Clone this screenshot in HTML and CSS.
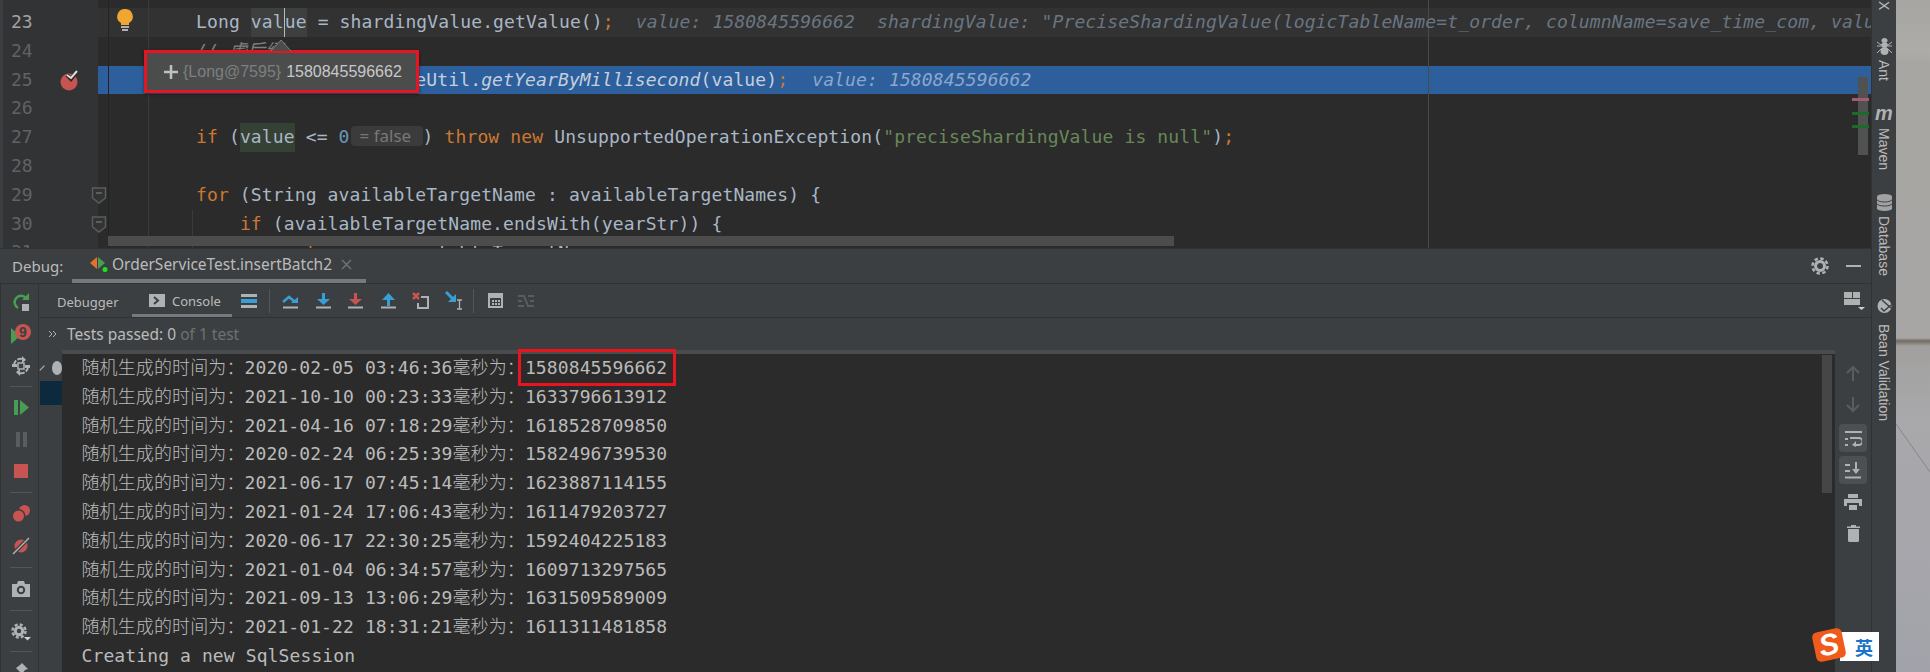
FILE: index.html
```html
<!DOCTYPE html>
<html lang="zh">
<head>
<meta charset="utf-8">
<title>Debug</title>
<link rel="stylesheet" href="styles.css">
</head>
<body>
<div class="root">
  <div class="ide">
    <section class="editor">
      <div class="row first"><div class="gutter">22</div><div class="code"></div></div>
      <div class="row current"><div class="gutter active">23</div><div class="code">Long <span class="sel">val<i class="caret"></i>ue</span> = shardingValue.getValue()<b class="kw">;</b>  <span class="hint">value: 1580845596662  shardingValue: "PreciseShardingValue(logicTableName=t_order, columnName=save_time_com, value=1580845596662)"</span></div>
        <svg class="bulb" width="16" height="24" viewBox="0 0 16 24"><path d="M8 0a7.5 7.5 0 0 1 4 14v2H4v-2A7.500 7.500 0 0 1 8 0z" fill="#f0a732"/><path d="M4 18h8M5 21h6" stroke="#afb1b3" stroke-width="2"/></svg>
      </div>
      <div class="row"><div class="gutter">24</div><div class="code"><span class="cm">// 虚后缀</span></div></div>
      <div class="row exec"><div class="gutter">25<svg class="bp" width="20" height="22" viewBox="0 0 20 22"><circle cx="9" cy="13" r="8.500" fill="#c75450"/><path d="M7 6l4 4 6-8" fill="none" stroke="#2b2b2b" stroke-width="4"/><path d="M7 6l4 3 6-7" fill="none" stroke="#e0e0e0" stroke-width="2"/></svg></div><div class="code">String yearStr = DateUtil.<em>getYearByMillisecond</em>(value)<b class="kw">;</b>  <span class="hint">value: 1580845596662</span></div></div>
      <div class="row"><div class="gutter">26</div><div class="code"></div></div>
      <div class="row"><div class="gutter">27</div><div class="code"><b class="kw">if</b> (<span class="read">value</span> &lt;= <span class="num">0</span><span class="inlay">= false</span>) <b class="kw">throw new</b> UnsupportedOperationException(<span class="str">"preciseShardingValue is null"</span>)<b class="kw">;</b></div></div>
      <div class="row"><div class="gutter">28</div><div class="code"></div></div>
      <div class="row"><div class="gutter">29<svg class="fold" width="16" height="17" viewBox="0 0 16 17"><path d="M1.500 1h13v10l-6.500 5-6.500-5z" fill="#313335" stroke="#5a5d5e" stroke-width="1.500"/><path d="M5 6h6" stroke="#6a6d6e" stroke-width="1.500"/></svg></div><div class="code"><b class="kw">for</b> (String availableTargetName : availableTargetNames) {</div></div>
      <div class="row"><div class="gutter">30<svg class="fold" width="16" height="17" viewBox="0 0 16 17"><path d="M1.500 1h13v10l-6.500 5-6.500-5z" fill="#313335" stroke="#5a5d5e" stroke-width="1.500"/><path d="M5 6h6" stroke="#6a6d6e" stroke-width="1.500"/></svg></div><div class="code guide">    <b class="kw">if</b> (availableTargetName.endsWith(yearStr)) {</div></div>
      <div class="row"><div class="gutter">31</div><div class="code guide">        <b class="kw">return</b>    availableTargetName<b class="kw">;</b></div></div>
      <div class="hscroll"></div>
      <div class="thumb"></div>
      <div class="stripe pink"></div>
      <div class="stripe green a"></div>
      <div class="stripe green b"></div>
      <div class="popup">
        <svg class="tip" width="22" height="13" viewBox="0 0 22 13"><path d="M1 12L11 1l10 11" fill="#4b4d4d" stroke="#7b7d7d"/></svg>
        <svg class="plus" width="14" height="14" viewBox="0 0 14 14"><path d="M7 0v14M0 7h14" stroke="#c0c0c0" stroke-width="2.500"/></svg><span class="ref">{Long@7595}</span><span class="val">1580845596662</span>
      </div>
    </section>

    <section class="debug">
      <header class="dbg-head">
        <span class="dbg-title">Debug:</span>
        <div class="dbg-tab">
          <svg class="runicon" width="20" height="15" viewBox="0 0 20 15"><path d="M7 0v12L0 6z" fill="#e8702a"/><path d="M8 0v12l7-6z" fill="#499c54"/><circle cx="15" cy="12.500" r="2.500" fill="#19e619"/></svg>
          <span>OrderServiceTest.insertBatch2</span>
          <svg class="close" width="11" height="11" viewBox="0 0 11 11"><path d="M1 1l9 9M10 1l-9 9" stroke="#6e7173" stroke-width="1.500"/></svg>
        </div>
        <div class="head-tools">
          <svg width="18" height="18" viewBox="0 0 18 18"><circle cx="9" cy="9" r="4.500" fill="none" stroke="#afb1b3" stroke-width="3"/><circle cx="9" cy="9" r="7.500" fill="none" stroke="#afb1b3" stroke-width="2.500" stroke-dasharray="3.400 2.500"/></svg>
          <span class="minimize"></span>
        </div>
      </header>
      <div class="dbg-body">
        <aside class="rail">
          <div class="rb"><svg width="18" height="18" viewBox="0 0 18 18"><path d="M6 15A6.500 6.500 0 1 1 14 5" fill="none" stroke="#499c54" stroke-width="2.500"/><path d="M10 7h7V0z" fill="#499c54"/><rect x="10" y="11" width="7" height="7" fill="#afb1b3"/></svg></div>
          <div class="rb"><svg width="20" height="20" viewBox="0 0 20 20"><path d="M0 4l9 8-9 8z" fill="#499c54"/><circle cx="12" cy="8" r="8" fill="#c75450"/><text x="12" y="13" class="nine">9</text></svg></div>
          <div class="rb"><svg width="18" height="20" viewBox="0 0 18 20"><path d="M2 9a7 7 0 0 1 11-5M16 11a7 7 0 0 1-11 5" fill="none" stroke="#afb1b3" stroke-width="2" stroke-dasharray="5 1.500"/><path d="M0 8h5v3H0zM13 9h5v3h-5zM10 0l4 4-4 3zM8 13l-4 3 4 4z" fill="#afb1b3"/><rect x="6" y="7" width="6" height="6" fill="none" stroke="#afb1b3" stroke-width="1.500"/></svg></div>
          <div class="sep"></div>
          <div class="rb"><svg width="15" height="15" viewBox="0 0 15 15"><rect width="4" height="15" fill="#499c54"/><path d="M6 0l9 7.500L6 15z" fill="#499c54"/></svg></div>
          <div class="rb"><svg width="11" height="15" viewBox="0 0 11 15"><path d="M0 0h4v15H0zM7 0h4v15H7z" fill="#5a5d5e"/></svg></div>
          <div class="rb"><svg width="14" height="14" viewBox="0 0 14 14"><rect width="14" height="14" fill="#c75450"/></svg></div>
          <div class="sep wide"></div>
          <div class="rb"><svg width="18" height="18" viewBox="0 0 18 18"><circle cx="12.500" cy="5.500" r="5.500" fill="#c75450"/><circle cx="6.500" cy="11" r="7" fill="#3c3f41"/><circle cx="6.500" cy="11" r="5.500" fill="#c75450"/></svg></div>
          <div class="rb"><svg width="18" height="18" viewBox="0 0 18 18"><circle cx="9" cy="9" r="6.500" fill="#c75450"/><path d="M1 17L17 1" stroke="#3c3f41" stroke-width="4"/><path d="M1 17L17 1" stroke="#afb1b3" stroke-width="1.500"/></svg></div>
          <div class="sep wide"></div>
          <div class="rb"><svg width="18" height="16" viewBox="0 0 18 16"><path d="M0 3h5l1-3h6l1 3h5v13H0z" fill="#afb1b3"/><circle cx="9" cy="9" r="3.200" fill="none" stroke="#3c3f41" stroke-width="2"/></svg></div>
          <div class="sep wide"></div>
          <div class="rb"><svg width="20" height="18" viewBox="0 0 20 18"><circle cx="8" cy="8" r="3.700" fill="none" stroke="#afb1b3" stroke-width="3"/><circle cx="8" cy="8" r="6.500" fill="none" stroke="#afb1b3" stroke-width="2.500" stroke-dasharray="3 2.100"/><path d="M13 14h7l-3.500 3.500z" fill="#cfd0d1"/></svg></div>
          <div class="sep tight"></div>
          <div class="rb"><svg width="16" height="16" viewBox="0 0 16 16"><path d="M9 0l6 6-3 1-3 4-6-6 4-3zM4 9l3 3-6 4z" fill="#afb1b3"/></svg></div>
        </aside>
        <div class="main">
          <div class="tabs">
            <div class="tab">Debugger</div>
            <div class="tab on"><svg width="16" height="13" viewBox="0 0 16 13"><rect width="16" height="13" fill="#afb1b3"/><path d="M5 3l4 3.500L5 10" fill="none" stroke="#3c3f41" stroke-width="2"/></svg>Console</div>
            <svg class="tb menu" width="16" height="14" viewBox="0 0 16 14"><path d="M0 0h16v3H0zM0 11h16v3H0z" fill="#afb1b3"/><path d="M0 5h16v4H0z" fill="#389fd6"/></svg>
            <span class="vsep"></span>
            <svg class="tb" width="17" height="16" viewBox="0 0 17 16"><path d="M1 9l6-5 6 5" fill="none" stroke="#389fd6" stroke-width="2.500"/><path d="M9 10h7V4z" fill="#389fd6"/><path d="M1 14.500h15" stroke="#afb1b3" stroke-width="2"/></svg>
            <svg class="tb" width="17" height="16" viewBox="0 0 17 16"><path d="M8.500 0v7" stroke="#389fd6" stroke-width="3"/><path d="M2 6h13l-6.500 6z" fill="#389fd6"/><path d="M1 14.500h15" stroke="#afb1b3" stroke-width="2"/></svg>
            <svg class="tb" width="17" height="16" viewBox="0 0 17 16"><path d="M8.500 0v7" stroke="#c75450" stroke-width="3"/><path d="M2 6h13l-6.500 6z" fill="#c75450"/><path d="M1 14.500h15" stroke="#afb1b3" stroke-width="2"/></svg>
            <svg class="tb" width="17" height="16" viewBox="0 0 17 16"><path d="M8.500 5v8" stroke="#389fd6" stroke-width="3"/><path d="M2 7h13L8.500 0z" fill="#389fd6"/><path d="M1 14.500h15" stroke="#afb1b3" stroke-width="2"/></svg>
            <svg class="tb" width="17" height="17" viewBox="0 0 17 17"><path d="M9 5h7v11H6v-5" fill="none" stroke="#afb1b3" stroke-width="2"/><path d="M1 1l6 6M7 1L1 7" stroke="#c75450" stroke-width="2.500"/></svg>
            <svg class="tb last" width="19" height="19" viewBox="0 0 19 19"><path d="M1 1l8 8" stroke="#389fd6" stroke-width="3"/><path d="M11 3v8H3z" fill="#389fd6"/><path d="M12 9h5M12 18h5M14.500 9v9" stroke="#afb1b3" stroke-width="1.300"/></svg>
            <span class="vsep two"></span>
            <svg class="tb" width="15" height="15" viewBox="0 0 15 15"><rect x="1" y="1" width="13" height="13" fill="none" stroke="#afb1b3" stroke-width="2"/><path d="M1 1h13v4H1z" fill="#afb1b3"/><path d="M4 7h2v2H4zM7 7h2v2H7zM10 7h2v2h-2zM4 10h2v2H4zM7 10h2v2H7zM10 10h2v2h-2z" fill="#afb1b3"/></svg>
            <svg class="tb" width="16" height="14" viewBox="0 0 16 14"><path d="M0 2h6l4 10h6M0 7h4M12 7h4M10 2h6M0 12h6" fill="none" stroke="#5a5d5e" stroke-width="2"/></svg>
            <svg class="layout" width="22" height="18" viewBox="0 0 22 18"><path d="M0 0h8v6H0zM9 0h7v6H9zM0 7h16v6H0z" fill="#afb1b3"/><path d="M14 15h7l-3.500 3z" fill="#cfd0d1"/></svg>
          </div>
          <div class="tests"><svg class="chev" width="9" height="8" viewBox="0 0 9 8"><path d="M1 1l3 3-3 3M5 1l3 3-3 3" fill="none" stroke="#afb1b3"/></svg><span>Tests passed: 0 </span><span class="dim">of 1 test</span></div>
          <div class="panes">
            <div class="frames">
              <div class="frame"><svg width="9" height="8" viewBox="0 0 9 8"><path d="M1 7l6-6" stroke="#afb1b3" stroke-width="1.500"/></svg><span class="dot"></span></div>
              <div class="frame chosen"></div>
            </div>
            <div class="console">
              <div class="cl">随机生成的时间为：2020-02-05 03:46:36毫秒为：<span class="mark">1580845596662</span></div>
              <div class="cl">随机生成的时间为：2021-10-10 00:23:33毫秒为：1633796613912</div>
              <div class="cl">随机生成的时间为：2021-04-16 07:18:29毫秒为：1618528709850</div>
              <div class="cl">随机生成的时间为：2020-02-24 06:25:39毫秒为：1582496739530</div>
              <div class="cl">随机生成的时间为：2021-06-17 07:45:14毫秒为：1623887114155</div>
              <div class="cl">随机生成的时间为：2021-01-24 17:06:43毫秒为：1611479203727</div>
              <div class="cl">随机生成的时间为：2020-06-17 22:30:25毫秒为：1592404225183</div>
              <div class="cl">随机生成的时间为：2021-01-04 06:34:57毫秒为：1609713297565</div>
              <div class="cl">随机生成的时间为：2021-09-13 13:06:29毫秒为：1631509589009</div>
              <div class="cl">随机生成的时间为：2021-01-22 18:31:21毫秒为：1611311481858</div>
              <div class="cl">Creating a new SqlSession</div>
              <div class="cthumb"></div>
            </div>
            <div class="ctools">
              <svg class="ct" width="14" height="16" viewBox="0 0 14 16"><path d="M7 16V2M1 8l6-6 6 6" fill="none" stroke="#5a5d5e" stroke-width="2"/></svg>
              <svg class="ct" width="14" height="16" viewBox="0 0 14 16"><path d="M7 0v14M1 8l6 6 6-6" fill="none" stroke="#5a5d5e" stroke-width="2"/></svg>
              <div class="toggle"><svg width="17" height="17" viewBox="0 0 17 17"><path d="M0 2h17" stroke="#afb1b3" stroke-width="2"/><path d="M5 8h9a2.500 2.500 0 0 1 0 7H9" fill="none" stroke="#afb1b3" stroke-width="2"/><path d="M11 11l-4 4 4 2zM0 8h3v2H0zM0 14h3v2H0z" fill="#afb1b3"/></svg></div>
              <div class="toggle"><svg width="16" height="17" viewBox="0 0 16 17"><path d="M0 15.500h16M0 3h5M0 9h5M11 0v10" stroke="#afb1b3" stroke-width="2"/><path d="M7 7h8l-4 5z" fill="#afb1b3"/></svg></div>
              <svg class="ct print" width="18" height="17" viewBox="0 0 18 17"><path d="M4 0h10v4H4zM0 5h18v7h-3V9H3v3H0zM5 11h8v5H5z" fill="#afb1b3"/></svg>
              <svg class="ct trash" width="13" height="17" viewBox="0 0 13 17"><path d="M0 1.500h13V3H0zM4 0h5v2H4zM1 4h11v11.500a1.500 1.500 0 0 1-1.500 1.500h-8A1.500 1.500 0 0 1 1 15.500z" fill="#afb1b3"/></svg>
            </div>
          </div>
        </div>
      </div>
    </section>
  </div>

  <aside class="strip">
    <span class="label cut">X</span>
    <svg class="si ant" width="15" height="17" viewBox="0 0 15 17"><ellipse cx="7.500" cy="2.500" rx="3" ry="2.500" fill="#afb1b3"/><ellipse cx="7.500" cy="7" rx="3.500" ry="2.500" fill="#afb1b3"/><ellipse cx="7.500" cy="13" rx="4" ry="4" fill="#afb1b3"/><path d="M0 4l4 3M15 4l-4 3M0 8h4M15 8h-4M0 15l4-4M15 15l-4-4" stroke="#afb1b3"/></svg>
    <span class="label">Ant</span>
    <span class="mvn">m</span>
    <span class="label">Maven</span>
    <svg class="si db" width="15" height="17" viewBox="0 0 15 17"><path d="M0 2.500a7.500 2.500 0 0 1 15 0v12a7.500 2.500 0 0 1-15 0z" fill="#a0a2a4"/><path d="M0 5.500a7.500 2.500 0 0 0 15 0M0 9.500a7.500 2.500 0 0 0 15 0" fill="none" stroke="#3c3f41"/></svg>
    <span class="label">Database</span>
    <svg class="si bean" width="15" height="16" viewBox="0 0 15 16"><circle cx="7.500" cy="8" r="7" fill="#afb1b3"/><path d="M5 2l9 8M4 10l3 3 7-6" fill="none" stroke="#3c3f41" stroke-width="1.500"/></svg>
    <span class="label">Bean Validation</span>
  </aside>
  <div class="wall"><svg class="crack" width="34" height="60" viewBox="0 0 34 60"><path d="M0 0l34 48" stroke="#85858b"/></svg></div>

  <div class="ime"><span class="ime-s">S</span><span class="ime-t">英</span></div>
</div>
</body>
</html>
```
FILE: styles.css
```css
* { box-sizing: border-box; }
html, body { margin: 0; height: 100%; background: #3c3f41; }
body { overflow: hidden; }
.root { position: relative; display: flex; width: 1930px; height: 672px; overflow: hidden; font-family: "Noto Sans", "Noto Sans CJK SC", sans-serif; color: #bbbbbb; }
.ide { width: 1871px; display: flex; flex-direction: column; }

/* editor */
.editor { position: relative; height: 248px; overflow: hidden; background: #2b2b2b; border-left: 3px solid #3c3f41; flex: none; font: 18px/28.800px "DejaVu Sans Mono", "Noto Sans CJK SC", monospace; letter-spacing: .13px; color: #a9b7c6; }
.row { position: relative; display: flex; height: 28.800px; }
.row.first { margin-top: -20.800px; }
.gutter { position: relative; width: 95px; flex: none; padding-left: 8px; background: #313335; color: #606366; letter-spacing: 0; }
.gutter.active { color: #a4a3a3; }
.code { flex: 1; min-width: 0; padding-left: 98px; white-space: pre; overflow: hidden;
  background-image: linear-gradient(#3a3c3c, #3a3c3c), linear-gradient(#232323, #232323), linear-gradient(#4a4a4a, #4a4a4a);
  background-repeat: no-repeat; background-size: 1px 100%; background-position: 50px 0, 10px 0, 1330px 0; }
.code.guide { background-image: linear-gradient(#3a3c3c, #3a3c3c), linear-gradient(#232323, #232323), linear-gradient(#4a4a4a, #4a4a4a), linear-gradient(#3a3c3c, #3a3c3c); background-position: 50px 0, 10px 0, 1330px 0, 94px 0; }
.current .code { background-color: #323232; }
.exec .code { background-color: #2d5f9c; color: #c3cfdc; }
.exec em { font-style: italic; }
.exec .hint { color: #8ca7cb; margin-left: 2px; }
.kw { font-weight: 400; color: #cc7832; }
.num { color: #6897bb; }
.str { color: #6a8759; }
.cm { color: #808080; font-style: italic; }
.hint { font-style: italic; color: #697682; }
.sel { display: inline-block; height: 28.800px; background: #3e4040; }
.read { display: inline-block; height: 28.800px; background: #344134; }
.caret { display: inline-block; width: 0; height: 28.800px; vertical-align: top; border-left: 1px solid #bbbbbb; }
.inlay { display: inline-block; width: 72px; height: 20px; margin: 0 0 0 1px; padding-left: 9px; border-radius: 4px; background: #3b3b3b; color: #787878; font: 17px/20px "Noto Sans", sans-serif; letter-spacing: 0; vertical-align: 1px; }
.bulb { position: absolute; left: 114px; top: 1px; }
.bp { position: absolute; left: 57px; top: 3px; }
.fold { position: absolute; left: 88px; top: 6px; }
.hscroll { position: absolute; left: 105px; top: 236px; width: 1066px; height: 10px; background: #4c4c4c; }
.thumb { position: absolute; left: 1855px; top: 77px; width: 10px; height: 78px; background: #505252; }
.stripe { position: absolute; left: 1849px; width: 17px; height: 3px; }
.stripe.pink { top: 98px; background: #a85a6e; }
.stripe.green { background: #1c6b28; }
.stripe.a { top: 112px; }
.stripe.b { top: 125px; }
.popup { position: absolute; left: 141px; top: 50px; width: 275px; height: 43px; display: flex; align-items: center; padding-left: 17px; background: #4b4d4d; border: 3px solid #e8141f; box-shadow: 0 1px 3px rgba(0,0,0,.5); font: 16px "Liberation Sans", sans-serif; letter-spacing: 0; }
.tip { position: absolute; left: 123px; top: -14px; }
.plus { flex: none; margin-right: 5px; }
.ref { color: #7d7f80; }
.val { color: #c8c8c8; margin-left: 5px; }

/* debug tool window */
.debug { flex: 1; display: flex; flex-direction: column; min-height: 0; border-top: 1px solid #323232; }
.dbg-head { height: 35px; flex: none; display: flex; align-items: center; padding-left: 12px; border-bottom: 1px solid #323232; font-size: 15px; }
.dbg-title { width: 60px; }
.dbg-tab { display: flex; align-items: center; align-self: stretch; width: 294px; padding-left: 18px; border-bottom: 4px solid #747a80; font-size: 15.500px; }
.runicon { flex: none; }
.dbg-tab span { margin-left: 2px; }
.dbg-tab .close { flex: none; margin-left: 9px; }
.head-tools { margin-left: auto; display: flex; align-items: center; gap: 17px; padding-right: 10px; }
.minimize { width: 15px; height: 2px; background: #afb1b3; }
.dbg-body { flex: 1; display: flex; min-height: 0; }
.rail { width: 39px; flex: none; padding: 2px 0 0 3px; border-right: 1px solid #323232; border-left: 1px solid #323232; display: flex; flex-direction: column; }
.rb { height: 32px; flex: none; display: flex; align-items: center; justify-content: center; }
.sep { height: 1px; margin: 4px 6px; flex: none; background: #515658; }
.sep.wide { margin: 5px 6px; }
.sep.tight { margin: 3px 6px; }
.nine { fill: #3c3f41; font: 700 14px "Liberation Sans", sans-serif; text-anchor: middle; }
.main { flex: 1; min-width: 0; display: flex; flex-direction: column; }
.tabs { height: 34px; flex: none; display: flex; align-items: center; border-bottom: 1px solid #323232; font-size: 13px; }
.tab { display: flex; align-items: center; align-self: stretch; }
.tab:first-child { width: 93px; padding: 2px 0 0 18px; }
.tab.on { width: 100px; gap: 7px; padding: 3px 0 0 17px; border-bottom: 3px solid #747a80; }
.tb { flex: none; margin-right: 15.500px; }
.menu { margin: 0 0 0 9px; }
.vsep { width: 1px; height: 24px; margin: 0 12px; background: #515658; }
.tb.last { margin-right: 0; }
.vsep.two { margin: 0 13.500px 0 9.500px; }
.layout { margin-left: auto; margin-right: 5px; }
.tests { height: 32px; flex: none; display: flex; align-items: center; padding-left: 9px; font-size: 15.500px; white-space: pre; }
.chev { flex: none; margin-right: 10px; }
.dim { color: #6e7173; }
.panes { flex: 1; display: flex; min-height: 0; }
.frames { width: 23px; flex: none; padding-top: 5px; }
.frame { height: 26px; display: flex; align-items: center; gap: 6px; overflow: hidden; }
.frame .dot { width: 10px; height: 14px; flex: none; border-radius: 50%; background: #afb1b3; }
.frame.chosen { background: #0d293e; height: 24px; margin-left: 1px; }
.console { position: relative; flex: 1; min-width: 0; padding-left: 19.500px; background: #2b2b2b; border-top: 4px solid #4a4b4c; font: 300 18px/28.800px "DejaVu Sans Mono", "Noto Sans CJK SC", monospace; letter-spacing: .11px; color: #bbbbbb; }
.cl { white-space: pre; height: 28.800px; }
.mark { display: inline-block; height: 37px; margin: -5px 0 0 -7px; padding: 0 6px 0 4px; border: 3px solid #e8141f; line-height: 31px; vertical-align: top; }
.cthumb { position: absolute; right: 3px; top: 1px; width: 10px; height: 138px; background: #464646; }
.ctools { width: 36px; flex: none; display: flex; flex-direction: column; align-items: center; padding-top: 15px; }
.ct { flex: none; margin-bottom: 16px; }
.toggle { width: 28px; height: 28px; flex: none; margin-bottom: 4px; display: flex; align-items: center; justify-content: center; border-radius: 4px; background: #4c5052; }
.toggle:nth-child(3) { margin-top: -5px; }
.print { margin-top: 6px; margin-bottom: 14px; }

/* right tool strip */
.strip { width: 25px; flex: none; display: flex; flex-direction: column; align-items: center; background: #3c3f41; border-left: 1px solid #323232; font-size: 14px; color: #bbbbbb; font-family: "Liberation Sans", sans-serif; }
.label { writing-mode: vertical-rl; flex: none; }
.label.cut { height: 14px; line-height: 18px; font-size: 14px; overflow: hidden; margin-top: 1px; }
.si { flex: none; }
.ant { margin-top: 23px; margin-bottom: 5px; }
.mvn { flex: none; height: 20px; margin-top: 22px; margin-bottom: 5px; font: italic 700 20px/20px "Liberation Sans", sans-serif; color: #afb1b3; }
.db { margin-top: 24px; margin-bottom: 5px; }
.bean { margin-top: 22px; margin-bottom: 10px; }

.wall { position: relative; flex: 1; background: linear-gradient(#a7a5a2 0, #aeaca9 52px, #a8a6a3 64px, #a8a6a4 338px, #736a63 341px, #a2a09e 346px, #a9a9ac 420px, #a2a2aa 672px); }
.crack { position: absolute; left: 0; top: 424px; }

/* input method badge */
.ime { position: absolute; left: 1840px; top: 632px; width: 39px; height: 29px; display: flex; align-items: center; justify-content: flex-end; padding-right: 6px; background: #ffffff; z-index: 2; }
.ime-s { position: absolute; left: -26px; top: -2px; width: 30px; height: 30px; border-radius: 5px; transform: rotate(-12deg); background: #f05a1a; color: #ffffff; text-align: center; font: italic 700 30px/30px "Liberation Sans", sans-serif; }
.ime-t { color: #1a73c8; font: 700 18px "Noto Sans CJK SC", sans-serif; }
```
